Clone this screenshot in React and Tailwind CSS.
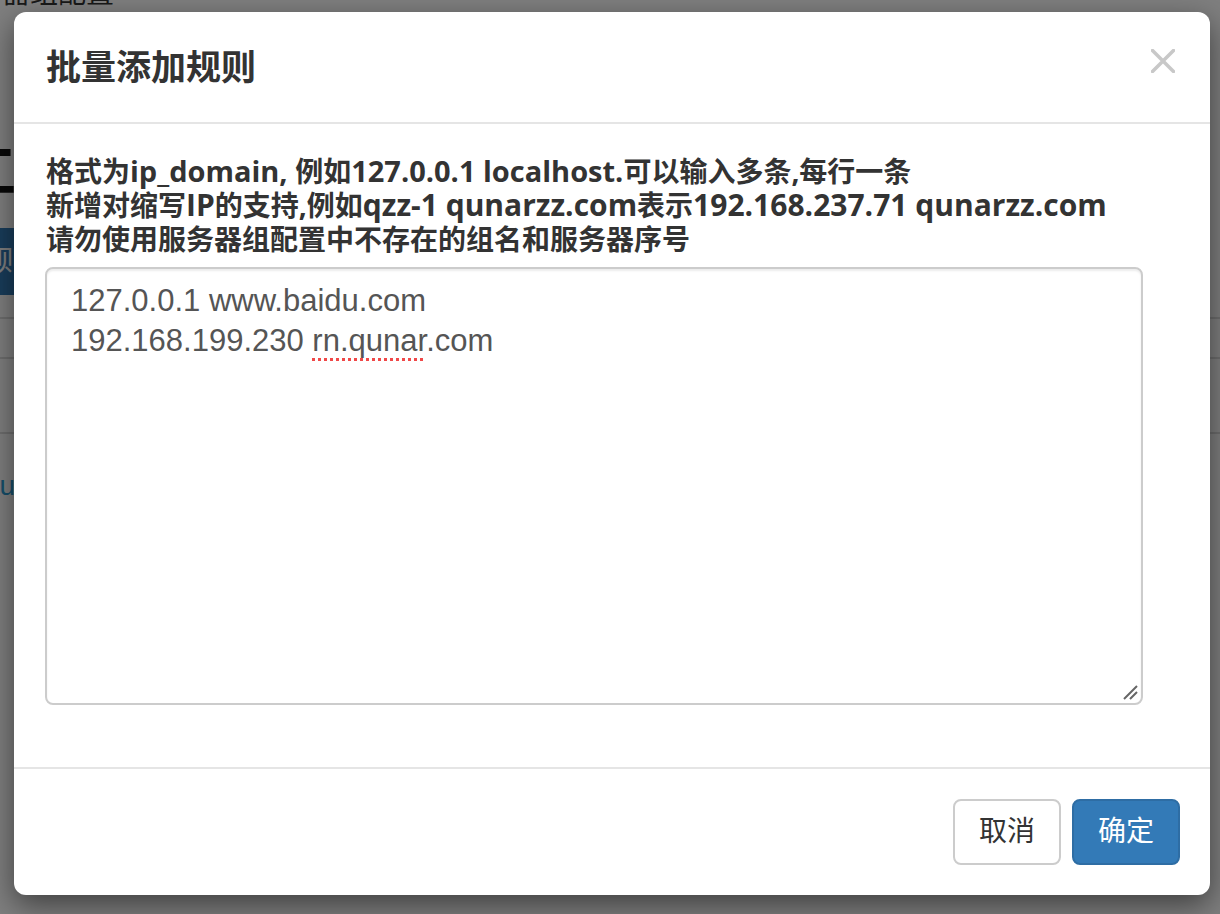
const SANS = "font-['Liberation_Sans','Noto_Sans_CJK_SC',sans-serif]";

function PageBehind() {
  return (
    <div className="flex flex-col text-[#333]">
      <div className="-ml-[54px] -mt-[24px] h-[164px] text-[28px] leading-[36px]">服务器组配置</div>
      <div className="-ml-[40px] h-[88px] text-[56px] font-bold leading-[64px] text-[#111]">工</div>
      <div className="-ml-[168px] flex h-[67px] w-[420px] items-center rounded-[8px] bg-[#337ab7] px-[24px] text-[28px] text-white">
        批量添加规则
      </div>
      <div className="mt-[22px] h-[40px] border-t-2 border-[#ddd]"></div>
      <div className="h-[75px] border-t-2 border-[#ddd]"></div>
      <div className="flex h-[106px] items-center border-t-2 border-[#ddd]">
        <span className="-ml-[16px] text-[28px] text-[#2a9fd6]">qunar</span>
      </div>
    </div>
  );
}

function CloseIcon() {
  return (
    <svg width="24" height="24" viewBox="0 0 24 24" className="mr-[5px] mt-[6px]">
      <path d="M1.5 1.5 L22.5 22.5 M22.5 1.5 L1.5 22.5" stroke="#c8c8c8" strokeWidth="3.5" strokeLinecap="square" />
    </svg>
  );
}

export default function App() {
  return (
    <div className={`relative h-[914px] w-[1220px] overflow-hidden bg-white ${SANS}`}>
      <PageBehind />
      <div className="absolute inset-0 bg-black/50"></div>

      <div className="absolute left-[14px] top-[12px] w-[1196px] rounded-[12px] bg-white shadow-[0_10px_30px_rgba(0,0,0,0.5)]">
        <div className="flex items-start justify-between border-b-2 border-[#e5e5e5] pl-[32px] pr-[30px] pt-[31px] pb-[29px]">
          <h4 className="text-[35px] font-semibold leading-[50px] text-[#333]">批量添加规则</h4>
          <CloseIcon />
        </div>

        <div className="pl-[32px] pr-[30px] pt-[30px] pb-[30px]">
          <div className="mb-[11px] font-['Open_Sans','Noto_Sans_CJK_SC',sans-serif] text-[28px] font-bold leading-[34px] text-[#333]">
            <div>
              格式为<span className="text-[29px] leading-[34px]">ip_domain, </span>例如<span className="text-[29px] leading-[34px]">127.0.0.1 localhost.</span>可以输入多条,每行一条
            </div>
            <div>
              新增对缩写<span className="text-[30px] leading-[34px]">IP</span>的支持,例如<span className="text-[30px] leading-[34px]">qzz-1 qunarzz.com</span>表示<span className="text-[30px] leading-[34px]">192.168.237.71 qunarzz.com</span>
            </div>
            <div>请勿使用服务器组配置中不存在的组名和服务器序号</div>
          </div>
          <div className="relative -ml-px mb-[32px] h-[438px] w-[1098px] rounded-[8px] border-2 border-[#ccc] pl-[24px] pt-[12px] text-[31px] leading-[40px] text-[#555] shadow-[inset_0_2px_2px_rgba(0,0,0,0.075)]">
            <div>127.0.0.1 www.baidu.com</div>
            <div>
              192.168.199.230{" "}
              <span className="underline decoration-[#f04848] decoration-dotted decoration-[3px] underline-offset-[7px]">rn.qunar</span>
              .com
            </div>
            <svg width="18" height="18" viewBox="0 0 18 18" className="absolute bottom-[1px] right-[1px]">
              <path d="M2 15 L15 2 M8 15 L15 8" stroke="#666" strokeWidth="2" />
            </svg>
          </div>
        </div>

        <div className="flex justify-end gap-[11px] border-t-2 border-[#e5e5e5] px-[30px] pt-[30px] pb-[30px]">
          <button className="h-[66px] rounded-[8px] border-2 border-[#ccc] bg-white px-[24px] text-[28px] text-[#333]">取消</button>
          <button className="h-[66px] rounded-[8px] border-2 border-[#2e6da4] bg-[#337ab7] px-[24px] text-[28px] text-white">确定</button>
        </div>
      </div>
    </div>
  );
}
